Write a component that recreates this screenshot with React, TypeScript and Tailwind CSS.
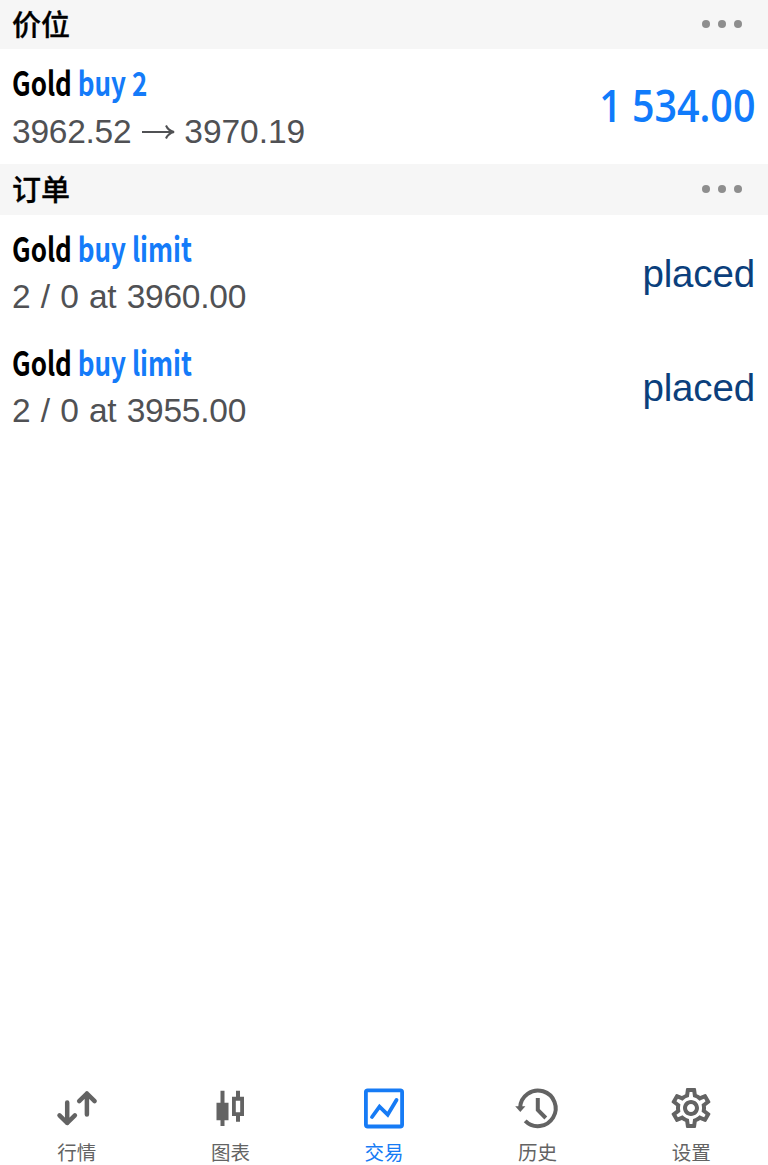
import { ReactNode } from "react";
import { MdOutlineSettings } from "react-icons/md";

type Row = {
    symbol: string;
    action: string;
    details: ReactNode;
    value: ReactNode;
}

const positions: Row[] = [
    {
        symbol: "Gold",
        action: "buy 2",
        details: (
            <>
                <span>3962.52</span>
                <svg className="mr-[8px] ml-[10px] h-4 w-[35px]" viewBox="0 0 35 16" fill="none" stroke="currentColor" strokeWidth="2">
                    <path d="M1 8h32M25 1.500c1.500 3.500 4 5.500 8 6.500c-4 1-6.500 3-8 6.500" />
                </svg>
                <span className="tracking-[-0.05px]">3970.19</span>
            </>
        ),
        value: (
            <span className="-mt-1 inline-block origin-right scale-x-[0.875] font-['Open_Sans',sans-serif] text-[45px] leading-none font-semibold text-[#107bfb]">
                1 534.00
            </span>
        ),
    },
];

const placed = <span className="mt-1 text-[38.5px] tracking-[-0.15px] text-[#0b3f7c]">placed</span>;

const orders: Row[] = [
    { symbol: "Gold", action: "buy limit", details: "2 / 0 at 3960.00", value: placed },
    { symbol: "Gold", action: "buy limit", details: "2 / 0 at 3955.00", value: placed },
];

function SectionHeader({ title, className }: { title: string; className: string }) {
    return (
        <div className={`flex items-center justify-between bg-[#f6f6f6] pb-0.5 pl-3 pr-[26px] ${className}`}>
            <h2 className="font-['Noto_Sans_CJK_SC',sans-serif] text-[29px] leading-none font-medium text-black [-webkit-text-stroke:0.3px_black]">{title}</h2>
            <div className="flex gap-2">
                <span className="size-2 rounded-full bg-[#8e8e8e]" />
                <span className="size-2 rounded-full bg-[#8e8e8e]" />
                <span className="size-2 rounded-full bg-[#8e8e8e]" />
            </div>
        </div>
    );
}

function TradeRow({ row, className }: { row: Row; className: string }) {
    return (
        <div className={`flex items-center justify-between pl-3 pr-[13px] ${className}`}>
            <div className="flex flex-col">
                <div className="h-[47px] origin-left scale-x-[0.788] font-['Noto_Sans_CJK_SC',sans-serif] text-[33px] leading-[47px] font-bold whitespace-pre text-black">
                    {row.symbol} <span className="text-[#147bf9]">{row.action}</span>
                </div>
                <div className="flex h-12 items-center pt-[3px] text-[33.5px] leading-[48px] tracking-[-0.25px] [word-spacing:1.3px] whitespace-pre text-[#505154]">
                    {row.details}
                </div>
            </div>
            {row.value}
        </div>
    );
}

function QuotesIcon() {
    return (
        <svg className="size-12" viewBox="0 0 48 48" fill="none" stroke="currentColor" strokeWidth="4.500" strokeLinecap="round" strokeLinejoin="round">
            <path d="M14.200 18.500V39M6.500 31.300l7.700 7.700 7.700-7.700" />
            <path d="M33.900 30.500V9.500M26.200 17.200l7.700-7.700 7.700 7.700" />
        </svg>
    );
}

function ChartIcon() {
    return (
        <svg className="size-12" viewBox="0 0 48 48" fill="currentColor">
            <path d="M14.500 6.700h4v12h4v17.600h-4V42h-4v-5.700h-4V18.700h4z" />
            <path fillRule="evenodd" d="M30 6.700h4v6h4V32h-4v5.700h-4V32h-4V12.700h4zM29.800 16.700v11.600h4.400V16.700z" />
        </svg>
    );
}

function TradeIcon() {
    return (
        <svg className="size-12" viewBox="0 0 48 48" fill="none" stroke="currentColor" strokeWidth="3.800">
            <rect x="5.900" y="6.300" width="36.200" height="36.200" rx="1.800" />
            <path d="M12 33l7.500-10.300 8.200 8 8.800-14.700" strokeLinecap="round" />
        </svg>
    );
}

function HistoryIcon() {
    return (
        <svg className="size-12" viewBox="0 0 48 48" fill="none" stroke="currentColor" strokeWidth="4">
            <path d="M6.100 23.500A17.800 17.800 0 1 1 11.200 36.800" />
            <path d="M1.200 22.300h10.200L6.300 28z" fill="currentColor" stroke="none" />
            <path d="M23.800 14v12l8 8" />
        </svg>
    );
}

const tabs = [
    { label: "行情", icon: <QuotesIcon /> },
    { label: "图表", icon: <ChartIcon /> },
    { label: "交易", icon: <TradeIcon />, active: true },
    { label: "历史", icon: <HistoryIcon /> },
    { label: "设置", icon: <MdOutlineSettings className="size-12" /> },
];

export default function App() {
    return (
        <div className="flex h-[1165px] w-[768px] flex-col overflow-hidden bg-white font-['Liberation_Sans',Arial,sans-serif]">
            <main className="flex-1">
                <SectionHeader title="价位" className="h-[49px]" />
                {positions.map((row, i) => (
                    <TradeRow key={i} row={row} className="h-[115px]" />
                ))}
                <SectionHeader title="订单" className="h-[51px]" />
                {orders.map((row, i) => (
                    <TradeRow key={i} row={row} className="h-[114px]" />
                ))}
            </main>
            <nav className="grid h-[81px] grid-cols-5">
                {tabs.map((tab) => (
                    <button
                        key={tab.label}
                        className={`flex flex-col items-center ${tab.active ? "text-[#167bf5]" : "text-[#636363]"}`}
                    >
                        {tab.icon}
                        <span className="mt-1.5 font-['Noto_Sans_CJK_SC',sans-serif] text-[19.5px] leading-7 font-normal">
                            {tab.label}
                        </span>
                    </button>
                ))}
            </nav>
        </div>
    );
}
